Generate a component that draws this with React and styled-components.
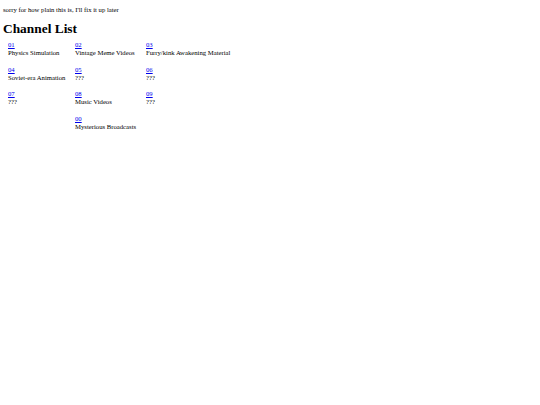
import styled, { createGlobalStyle } from 'styled-components'

const GlobalStyle = createGlobalStyle`
  html, body {
    margin: 0;
    padding: 0;
    background: #ffffff;
  }
  body {
    font-family: "Liberation Serif", "Times New Roman", serif;
    color: #000000;
  }
`

const Page = styled.div`
  padding: 6px 3px 0 3px;
`

const Note = styled.p`
  margin: 0;
  font-size: 6.7px;
  line-height: 8px;
`

const Title = styled.h1`
  margin: 7px 0 0 0;
  font-size: 13.4px;
  line-height: 16px;
  font-weight: 700;
`

const ChannelGrid = styled.div`
  display: grid;
  grid-template-columns: 67px 71px auto;
  row-gap: 8.5px;
  margin-top: 4px;
  padding-left: 5px;
`

const Cell = styled.div`
  grid-column: ${(p) => p.$col};
  display: flex;
  flex-direction: column;
  font-size: 6.7px;
  line-height: 8px;
`

const ChannelLink = styled.a`
  color: #0000ee;
  text-decoration: underline;
  align-self: flex-start;
`

const channels = [
  { num: '01', name: 'Physics Simulation', col: 1 },
  { num: '02', name: 'Vintage Meme Videos', col: 2 },
  { num: '03', name: 'Furry/kink Awakening Material', col: 3 },
  { num: '04', name: 'Soviet-era Animation', col: 1 },
  { num: '05', name: '???', col: 2 },
  { num: '06', name: '???', col: 3 },
  { num: '07', name: '???', col: 1 },
  { num: '08', name: 'Music Videos', col: 2 },
  { num: '09', name: '???', col: 3 },
  { num: '00', name: 'Mysterious Broadcasts', col: 2 },
]

export default function App() {
  return (
    <>
      <GlobalStyle />
      <Page>
        <Note>sorry for how plain this is, I'll fix it up later</Note>
        <Title>Channel List</Title>
        <ChannelGrid>
          {channels.map((c) => (
            <Cell key={c.num} $col={c.col}>
              <ChannelLink href={`#ch${c.num}`}>{c.num}</ChannelLink>
              <span>{c.name}</span>
            </Cell>
          ))}
        </ChannelGrid>
      </Page>
    </>
  )
}
